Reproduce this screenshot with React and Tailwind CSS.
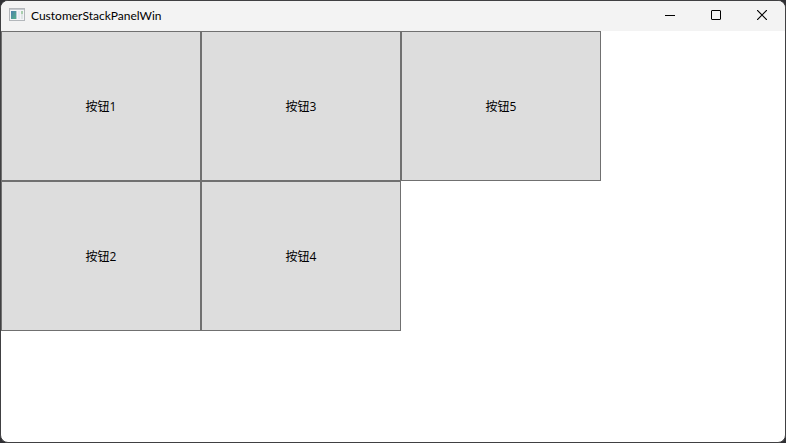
import React from "react";

const labels = ["按钮1", "按钮2", "按钮3", "按钮4", "按钮5"];

function AppIcon() {
  return (
    <svg width="16" height="16" viewBox="0 0 16 16" aria-hidden="true">
      <defs>
        <linearGradient id="pane" x1="0" y1="0" x2="1" y2="1">
          <stop offset="0" stopColor="#4a7fae" />
          <stop offset="1" stopColor="#55b08a" />
        </linearGradient>
      </defs>
      <rect x="0.5" y="0.5" width="15" height="12" fill="#f4f5f7" stroke="#b3b7bb" />
      <rect x="1" y="1" width="14" height="1" fill="#c5c9ce" />
      <rect x="2" y="3" width="5" height="8" fill="url(#pane)" />
      <rect x="7" y="3" width="1" height="8" fill="#b5cbd6" />
      <rect x="9" y="3" width="2" height="8" fill="#e6eaf2" />
      <rect x="12" y="3" width="2" height="3" fill="#a9cfae" />
      <rect x="12" y="6" width="2" height="5" fill="#e0e6e6" />
    </svg>
  );
}

function CaptionButton({ label, children }) {
  return (
    <button type="button" aria-label={label} className="flex w-[46px] items-center justify-center pb-0.5">
      <svg width="10" height="10" viewBox="0 0 10 10" fill="none" stroke="#000" aria-hidden="true">
        {children}
      </svg>
    </button>
  );
}

export default function App() {
  return (
    <div className="h-screen bg-[#303034] font-['Open_Sans','Noto_Sans_CJK_SC',sans-serif] text-xs text-black">
      <div className="flex h-full flex-col overflow-hidden rounded-lg border border-[#404042] bg-white">
        <header className="flex h-[30px] shrink-0 justify-between bg-[#f3f3f3]">
          <div className="flex items-center gap-1.5 pl-2">
            <AppIcon />
            <h1 className="font-[Lato,sans-serif]">CustomerStackPanelWin</h1>
          </div>
          <div className="flex">
            <CaptionButton label="Minimize">
              <path d="M0 5.5H10" />
            </CaptionButton>
            <CaptionButton label="Maximize">
              <rect x="0.5" y="0.5" width="9" height="9" rx="0.5" />
            </CaptionButton>
            <CaptionButton label="Close">
              <path d="M0 0L10 10M10 0L0 10" strokeWidth="1.2" />
            </CaptionButton>
          </div>
        </header>
        <main className="grid grow auto-cols-[200px] grid-flow-col grid-rows-[150px_150px] content-start">
          {labels.map((label) => (
            <button key={label} type="button" className="border border-[#707070] bg-[#dddddd] pt-0.5">
              {label}
            </button>
          ))}
        </main>
      </div>
    </div>
  );
}
